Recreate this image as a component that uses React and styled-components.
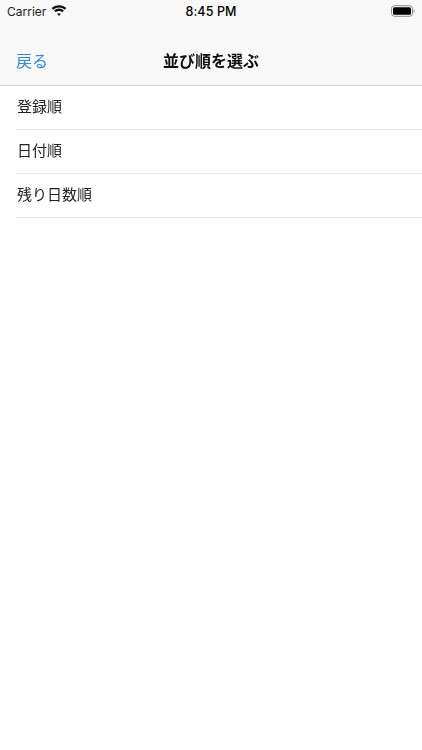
import React from "react";
import styled, { createGlobalStyle } from "styled-components";

const Global = createGlobalStyle`
  html, body { margin: 0; padding: 0; background: #fff; }
  * { box-sizing: border-box; }
  body { font-family: "Inter", "Liberation Sans", "Noto Sans CJK JP", sans-serif; }
`;
const Page = styled.div`
  width: 422px; height: 750px; background: #fff; overflow: hidden;
  display: flex; flex-direction: column;
  font-family: "Inter", "Liberation Sans", "Noto Sans CJK JP", sans-serif;
`;
const Header = styled.header`
  height: 86px; background: #f8f8f8; border-bottom: 1px solid #d8d8d8;
  display: flex; flex-direction: column; flex: none;
`;
const StatusBar = styled.div`
  height: 22px; display: grid; grid-template-columns: 1fr auto 1fr; align-items: center;
  padding: 0 7px; color: #000;
`;
const Left = styled.div`
  display: flex; align-items: center; gap: 5px; font-size: 12px; color: #222;
`;
const Clock = styled.div`font-size: 12.5px; font-weight: 500; letter-spacing: 0.1px;`;
const Right = styled.div`display: flex; justify-content: flex-end;`;
const NavBar = styled.div`
  flex: 1; display: grid; grid-template-columns: 1fr auto 1fr; align-items: center;
  padding: 13px 16px 0; will-change: transform;
`;
const Back = styled.a`
  font-family: "Noto Sans CJK JP", sans-serif; font-size: 16px; color: #2f89de;
`;
const Title = styled.h1`
  margin: 0; font-family: "Noto Sans CJK JP", sans-serif; font-size: 16px;
  font-weight: 700; color: #111;
`;
const List = styled.ul`
  list-style: none; margin: 0; padding: 0 0 0 16px; will-change: transform;
`;
const Row = styled.li`
  height: 44px; border-bottom: 1px solid #e8e8e8; display: flex; align-items: center;
  font-family: "Noto Sans CJK JP", sans-serif; font-size: 15px; color: #222;
  padding: 0 0 5px 1px;
`;

const Wifi = () => (
  <svg width="16" height="12" viewBox="0 0 17 12" aria-hidden="true">
    <path d="M8.5 2.4c2.3 0 4.4.9 6 2.4l1.9-2A11.300 11.300 0 0 0 8.500 0 11.300 11.300 0 0 0 .6 2.800l1.900 2a8.700 8.700 0 0 1 6-2.400z" fill="#111"/>
    <path d="M8.500 6c1.300 0 2.500.5 3.400 1.300l1.800-1.900a7.700 7.700 0 0 0-10.400 0l1.800 1.900A5 5 0 0 1 8.500 6z" fill="#111"/>
    <path d="M8.500 8.300c-.8 0-1.500.3-2 .7l2 2.300 2-2.300c-.5-.4-1.200-.7-2-.7z" fill="#111"/>
  </svg>
);
const Battery = () => (
  <svg width="24" height="12" viewBox="0 0 24 12" aria-hidden="true">
    <rect x="0.5" y="0.7" width="21" height="10.6" rx="3" fill="none" stroke="#8a8a8a"/>
    <rect x="2" y="2.2" width="18" height="7.600" rx="1.600" fill="#000"/>
    <rect x="22.600" y="4.400" width="1" height="3.200" rx="0.500" fill="#8a8a8a"/>
  </svg>
);

export default function App() {
  return (
    <Page>
      <Global />
      <Header>
        <StatusBar>
          <Left>Carrier <Wifi /></Left>
          <Clock>8:45 PM</Clock>
          <Right><Battery /></Right>
        </StatusBar>
        <NavBar>
          <div><Back>戻る</Back></div>
          <Title>並び順を選ぶ</Title>
          <div />
        </NavBar>
      </Header>
      <List>
        {["登録順", "日付順", "残り日数順"].map((t) => <Row key={t}>{t}</Row>)}
      </List>
    </Page>
  );
}
